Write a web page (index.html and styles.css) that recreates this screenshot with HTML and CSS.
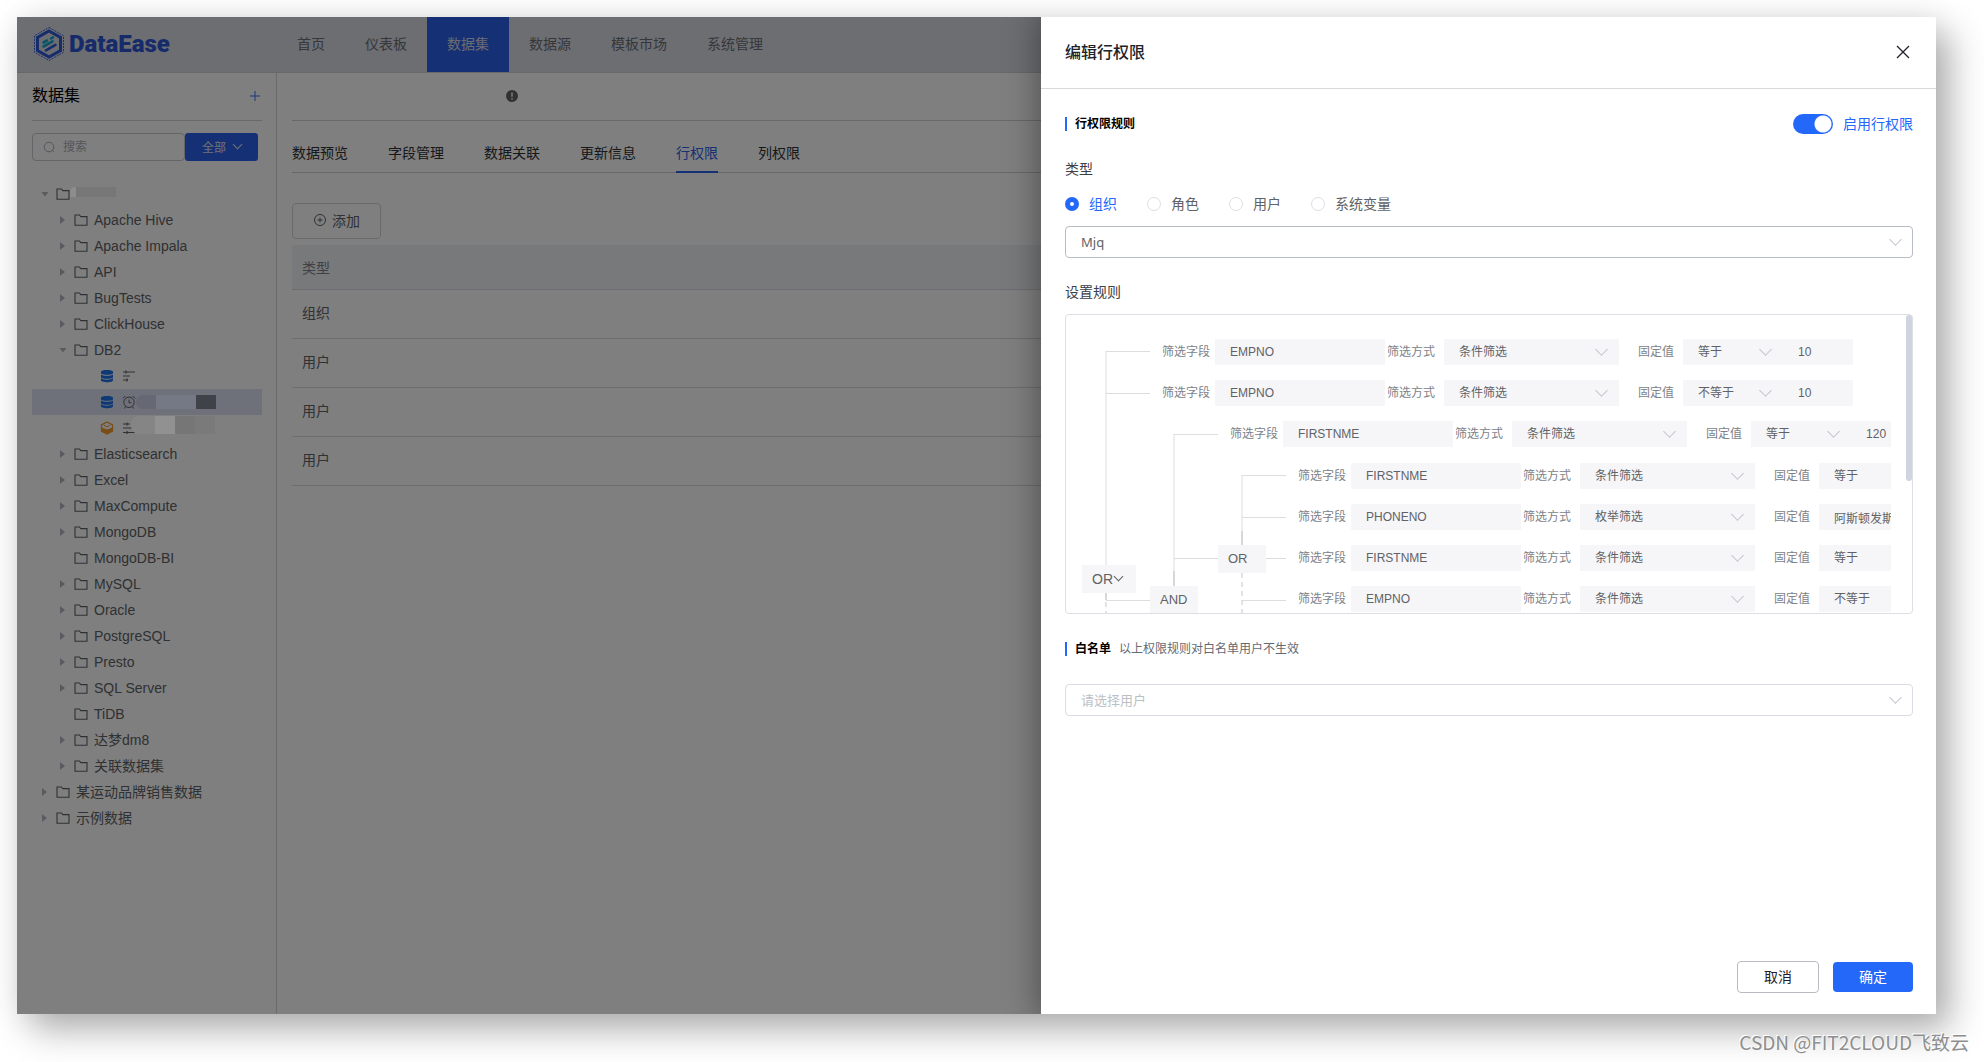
FILE: index.html
```html
<!DOCTYPE html>
<html lang="zh-CN">
<head>
    <meta charset="UTF-8">
    <meta name="viewport" content="width=device-width, initial-scale=1.0">
    <title>DataEase</title>
    <link rel="stylesheet" href="styles.css">
</head>
<body>
    <!-- icon sprite -->
    <svg class="sprite" width="0" height="0" aria-hidden="true">
        <symbol id="folder" viewBox="0 0 14 14"><path d="M1 2h4.400l1.400 1.600H13v8.600H1z" fill="none" stroke="currentColor" stroke-width="1.100"/></symbol>
        <symbol id="db" viewBox="0 0 14 14"><path d="M1 2.800C1 .4 13 .4 13 2.800v1.400c0 2-12 2-12 0zM1 5.400c1.500 1.900 10.500 1.900 12 0v2.800c0 2-12 2-12 0zM1 9.300c1.500 1.900 10.500 1.900 12 0v2c0 2.600-12 2.600-12 0z" fill="#1f73ea"/></symbol>
        <symbol id="cube" viewBox="0 0 14 14"><path d="M7 1l5.500 2.800v6.400L7 13l-5.500-2.800V3.800z" fill="none" stroke="#f09a2e" stroke-width="1.300"/><path d="M1.500 6.500L7 8.500l5.500-2v4L7 13l-5.500-2.500z" fill="#f09a2e"/><path d="M4 4.300L7 5.800l3-1.500" fill="none" stroke="#f09a2e"/></symbol>
        <symbol id="sync" viewBox="0 0 14 14"><path d="M1 3h12M1 7h7M1 11h5M4 1.500v3M5 9.500v3" fill="none" stroke="currentColor" stroke-width="1.200"/></symbol>
        <symbol id="sync2" viewBox="0 0 14 14"><path d="M1 3h7M1 7h9M1 11.500h12M5 1.500v3M5 10v3" fill="none" stroke="currentColor" stroke-width="1.200"/></symbol>
        <symbol id="alarm" viewBox="0 0 14 14"><circle cx="7" cy="7.300" r="5.200" fill="none" stroke="currentColor"/><path d="M7 4.500v3.200h2.500M.8 3.500L3.300 1M13.200 3.500L10.700 1M3.500 11.500l-1 2M10.500 11.500l1 2" fill="none" stroke="currentColor"/></symbol>
    </svg>

    <div class="app">
        <header class="topbar">
            <a class="logo" href="#">
                <svg width="32" height="36" viewBox="0 0 32 36" aria-hidden="true">
                    <path d="M16 1.500l14.500 8.200v16.600L16 34.500 1.500 26.300V9.700z" fill="none" stroke="#3a62d8" stroke-width="1" stroke-dasharray="2 1"/>
                    <path d="M16 5l11.500 6.500v13L16 31 4.500 24.500v-13z" fill="none" stroke="#3058d8" stroke-width="3"/>
                    <path d="M10.500 16.500l3.500-2M18 12.500l2-1.200M10.500 20.500l9-5.200" stroke="#14a9cf" stroke-width="2.600" stroke-linecap="round"/>
                    <path d="M13 24.300l9.500-5.500" stroke="#3058d8" stroke-width="2.600" stroke-linecap="round"/>
                </svg>
                <span>DataEase</span>
            </a>
            <nav class="menu">
                <a href="#">首页</a>
                <a href="#">仪表板</a>
                <a href="#" class="active">数据集</a>
                <a href="#">数据源</a>
                <a href="#">模板市场</a>
                <a href="#">系统管理</a>
            </nav>
        </header>

        <div class="content">
            <aside class="sidebar">
                <div class="side-title">
                    <h2>数据集</h2>
                    <button type="button" class="plus" aria-label="新建">
                        <svg width="12" height="12" viewBox="0 0 12 12"><path d="M6 1v10M1 6h10" stroke="#3370ff" fill="none"/></svg>
                    </button>
                </div>
                <div class="search">
                    <label class="search-box">
                        <svg width="12" height="12" viewBox="0 0 12 12"><circle cx="6" cy="6" r="4.800" fill="none" stroke="#a9adb8"/><path d="M9.300 9.300l1.700 1.700" stroke="#a9adb8"/></svg>
                        <input type="text" placeholder="搜索" aria-label="搜索">
                    </label>
                    <button type="button" class="all-btn">全部<i class="arrow"></i></button>
                </div>
                <ul class="tree">
                    <li><i class="caret open"></i><svg class="ico"><use href="#folder"/></svg><span class="smudge root"></span></li>
                    <li class="l1"><i class="caret"></i><svg class="ico"><use href="#folder"/></svg>Apache Hive</li>
                    <li class="l1"><i class="caret"></i><svg class="ico"><use href="#folder"/></svg>Apache Impala</li>
                    <li class="l1"><i class="caret"></i><svg class="ico"><use href="#folder"/></svg>API</li>
                    <li class="l1"><i class="caret"></i><svg class="ico"><use href="#folder"/></svg>BugTests</li>
                    <li class="l1"><i class="caret"></i><svg class="ico"><use href="#folder"/></svg>ClickHouse</li>
                    <li class="l1"><i class="caret open"></i><svg class="ico"><use href="#folder"/></svg>DB2</li>
                    <li class="l2"><svg class="ico"><use href="#db"/></svg><svg class="ico"><use href="#sync"/></svg></li>
                    <li class="l2 selected"><svg class="ico"><use href="#db"/></svg><svg class="ico"><use href="#alarm"/></svg><span class="smudge blue"></span></li>
                    <li class="l2"><svg class="ico"><use href="#cube"/></svg><svg class="ico"><use href="#sync2"/></svg><span class="smudge grey"></span></li>
                    <li class="l1"><i class="caret"></i><svg class="ico"><use href="#folder"/></svg>Elasticsearch</li>
                    <li class="l1"><i class="caret"></i><svg class="ico"><use href="#folder"/></svg>Excel</li>
                    <li class="l1"><i class="caret"></i><svg class="ico"><use href="#folder"/></svg>MaxCompute</li>
                    <li class="l1"><i class="caret"></i><svg class="ico"><use href="#folder"/></svg>MongoDB</li>
                    <li class="l1"><i class="caret none"></i><svg class="ico"><use href="#folder"/></svg>MongoDB-BI</li>
                    <li class="l1"><i class="caret"></i><svg class="ico"><use href="#folder"/></svg>MySQL</li>
                    <li class="l1"><i class="caret"></i><svg class="ico"><use href="#folder"/></svg>Oracle</li>
                    <li class="l1"><i class="caret"></i><svg class="ico"><use href="#folder"/></svg>PostgreSQL</li>
                    <li class="l1"><i class="caret"></i><svg class="ico"><use href="#folder"/></svg>Presto</li>
                    <li class="l1"><i class="caret"></i><svg class="ico"><use href="#folder"/></svg>SQL Server</li>
                    <li class="l1"><i class="caret none"></i><svg class="ico"><use href="#folder"/></svg>TiDB</li>
                    <li class="l1"><i class="caret"></i><svg class="ico"><use href="#folder"/></svg>达梦dm8</li>
                    <li class="l1"><i class="caret"></i><svg class="ico"><use href="#folder"/></svg>关联数据集</li>
                    <li><i class="caret"></i><svg class="ico"><use href="#folder"/></svg>某运动品牌销售数据</li>
                    <li><i class="caret"></i><svg class="ico"><use href="#folder"/></svg>示例数据</li>
                </ul>
            </aside>

            <main class="main">
                <div class="info">
                    <svg width="12" height="12" viewBox="0 0 12 12"><circle cx="6" cy="6" r="6" fill="#606266"/><path d="M6 2.500v4.300M6 8v1.500" stroke="#fff" stroke-width="1.400"/></svg>
                </div>
                <nav class="tabs">
                    <a href="#">数据预览</a>
                    <a href="#">字段管理</a>
                    <a href="#">数据关联</a>
                    <a href="#">更新信息</a>
                    <a href="#" class="active">行权限</a>
                    <a href="#">列权限</a>
                </nav>
                <button type="button" class="add-btn">
                    <svg width="14" height="14" viewBox="0 0 14 14"><circle cx="7" cy="7" r="5.500" fill="none" stroke="currentColor"/><path d="M7 4.500v5M4.500 7h5" stroke="currentColor"/></svg>
                    添加
                </button>
                <table class="perm-table">
                    <thead><tr><th>类型</th></tr></thead>
                    <tbody>
                        <tr><td>组织</td></tr>
                        <tr><td>用户</td></tr>
                        <tr><td>用户</td></tr>
                        <tr><td>用户</td></tr>
                    </tbody>
                </table>
            </main>
        </div>

        <div class="mask"></div>

        <section class="drawer">
            <header class="drawer-head">
                <h1>编辑行权限</h1>
                <button type="button" class="close" aria-label="关闭">
                    <svg width="14" height="14" viewBox="0 0 14 14"><path d="M1 1l12 12M13 1L1 13" stroke="#1f2329" stroke-width="1.300" fill="none"/></svg>
                </button>
            </header>

            <div class="drawer-body">
                <div class="section">
                    <h3>行权限规则</h3>
                    <label class="switch"><input type="checkbox" checked><span>启用行权限</span></label>
                </div>

                <div class="caption">类型</div>
                <div class="radios">
                    <label><input type="radio" name="type" checked><span>组织</span></label>
                    <label><input type="radio" name="type"><span>角色</span></label>
                    <label><input type="radio" name="type"><span>用户</span></label>
                    <label><input type="radio" name="type"><span>系统变量</span></label>
                </div>
                <div class="picker dark">
                    <select aria-label="组织"><option>Mjq</option></select>
                </div>

                <div class="caption rules-caption">设置规则</div>
                <div class="rules-box">
                    <div class="rules">
                        <svg class="links" width="220" height="300" viewBox="0 0 220 300" aria-hidden="true">
                            <g fill="none" stroke="#eeeeee" stroke-width="2">
                                <path d="M24 12v214M92 95v137M160 136v56"/>
                            </g>
                            <g fill="none" stroke="#d8d8d8" stroke-width="2">
                                <path d="M92 232v15M160 192v14M24 254v7"/>
                            </g>
                            <g fill="none" stroke="#e3e3e3" stroke-width="2" stroke-dasharray="5 4">
                                <path d="M24 263v30M160 234v60"/>
                            </g>
                            <g fill="none" stroke="#dddddd">
                                <path d="M24 12.500h44M24 54.500h44M24 261.500h44M92 95.500h44M92 219.500h44M160 136.500h44M160 178.500h44M160 219.500h44M160 261.500h44"/>
                            </g>
                        </svg>
                        <button type="button" class="op op-root">OR<i class="arrow"></i></button>
                        <button type="button" class="op op-and">AND</button>
                        <button type="button" class="op op-or">OR</button>

                        <div class="group">
                            <div class="rule">
                                <label class="field">筛选字段<input type="text" value="EMPNO"></label>
                                <label class="mode">筛选方式<span class="sel"><select><option>条件筛选</option></select></span></label>
                                <label class="value">固定值<span class="sel small"><select><option>等于</option></select></span></label>
                                <input class="num" type="text" value="10" aria-label="值">
                            </div>
                            <div class="rule">
                                <label class="field">筛选字段<input type="text" value="EMPNO"></label>
                                <label class="mode">筛选方式<span class="sel"><select><option>条件筛选</option></select></span></label>
                                <label class="value">固定值<span class="sel small"><select><option>不等于</option></select></span></label>
                                <input class="num" type="text" value="10" aria-label="值">
                            </div>
                            <div class="group">
                                <div class="rule">
                                    <label class="field">筛选字段<input type="text" value="FIRSTNME"></label>
                                    <label class="mode">筛选方式<span class="sel"><select><option>条件筛选</option></select></span></label>
                                    <label class="value">固定值<span class="sel small"><select><option>等于</option></select></span></label>
                                    <input class="num" type="text" value="120" aria-label="值">
                                </div>
                                <div class="group inner">
                                    <div class="rule">
                                        <label class="field">筛选字段<input type="text" value="FIRSTNME"></label>
                                        <label class="mode">筛选方式<span class="sel"><select><option>条件筛选</option></select></span></label>
                                        <label class="value">固定值<span class="sel small"><select><option>等于</option></select></span></label>
                                    </div>
                                    <div class="rule">
                                        <label class="field">筛选字段<input type="text" value="PHONENO"></label>
                                        <label class="mode">筛选方式<span class="sel"><select><option>枚举筛选</option></select></span></label>
                                        <label class="value">固定值<input type="text" value="阿斯顿发斯"></label>
                                    </div>
                                    <div class="rule">
                                        <label class="field">筛选字段<input type="text" value="FIRSTNME"></label>
                                        <label class="mode">筛选方式<span class="sel"><select><option>条件筛选</option></select></span></label>
                                        <label class="value">固定值<span class="sel small"><select><option>等于</option></select></span></label>
                                    </div>
                                    <div class="rule">
                                        <label class="field">筛选字段<input type="text" value="EMPNO"></label>
                                        <label class="mode">筛选方式<span class="sel"><select><option>条件筛选</option></select></span></label>
                                        <label class="value">固定值<span class="sel small"><select><option>不等于</option></select></span></label>
                                    </div>
                                </div>
                            </div>
                        </div>
                    </div>
                    <div class="thumb"></div>
                </div>

                <div class="section">
                    <h3>白名单</h3>
                    <p>以上权限规则对白名单用户不生效</p>
                </div>
                <div class="picker users">
                    <select aria-label="白名单"><option>请选择用户</option></select>
                </div>
            </div>

            <footer class="drawer-foot">
                <button type="button" class="cancel">取消</button>
                <button type="button" class="ok">确定</button>
            </footer>
        </section>
    </div>

    <div class="watermark">CSDN @FIT2CLOUD飞致云</div>
</body>
</html>
```

FILE: styles.css
```css
* {
    box-sizing: border-box;
}

body {
    margin: 0;
    padding: 17px 48px 48px 17px;
    background: #fff;
    font-family: "Liberation Sans", "Noto Sans CJK SC", sans-serif;
    font-size: 14px;
    line-height: 20px;
    color: #606266;
}

h1, h2, h3, p, ul {
    margin: 0;
    padding: 0;
}

a {
    color: inherit;
    text-decoration: none;
}

button, input, select {
    font-family: inherit;
    font-size: inherit;
    color: inherit;
    border: none;
    margin: 0;
    padding: 0;
    background: none;
    outline: none;
}

select {
    appearance: none;
}

.sprite {
    position: absolute;
}

.app {
    position: relative;
    display: flex;
    flex-direction: column;
    min-height: calc(100vh - 65px);
    background: #fff;
    box-shadow: 14px 16px 34px rgba(0, 0, 0, 0.3), 0 0 30px rgba(0, 0, 0, 0.08);
}

/* top bar */
.topbar {
    display: flex;
    height: 56px;
    background: #dadce5;
    border-bottom: 1px solid #cfd0d4;
}

.logo {
    display: flex;
    align-items: center;
    gap: 4px;
    width: 260px;
    padding-left: 16px;
    padding-bottom: 2px;
    font-family: Roboto, sans-serif;
    font-weight: 900;
    font-size: 24px;
    color: #2f57d6;
}

.menu {
    display: flex;
}

.menu a {
    padding: 0 20px;
    line-height: 55px;
    color: #6c6e75;
}

.menu .active {
    background: #2a61e8;
    color: #d4d9e6;
}

.content {
    display: flex;
    flex: 1;
}

/* dataset tree */
.sidebar {
    width: 260px;
    padding: 0 14px 0 15px;
    border-right: 1px solid #d4d5d8;
}

.side-title {
    display: flex;
    justify-content: space-between;
    align-items: center;
    height: 48px;
    padding-bottom: 2px;
    border-bottom: 1px solid #d0d1d4;
}

.side-title h2 {
    font-size: 16px;
    font-weight: 400;
    color: #000;
}

.plus {
    display: flex;
    padding-right: 1px;
}

.search {
    display: flex;
    margin: 12px 4px 20px 0;
}

.search-box {
    display: flex;
    align-items: center;
    gap: 8px;
    flex: 1;
    height: 28px;
    padding-left: 10px;
    border: 1px solid #c8cad0;
    border-radius: 4px;
    font-size: 12px;
}

.search-box input {
    width: 100px;
}

.search-box input::placeholder {
    color: #a9adb8;
    opacity: 1;
}

.all-btn {
    display: flex;
    align-items: center;
    justify-content: center;
    gap: 8px;
    width: 73px;
    height: 28px;
    padding-bottom: 2px;
    background: #2a61e8;
    border-radius: 3px;
    color: #e0e4ee;
    font-size: 12px;
}

.arrow {
    width: 7px;
    height: 7px;
    margin-top: -4px;
    border: solid currentColor;
    border-width: 0 1px 1px 0;
    transform: rotate(45deg);
}

.tree {
    list-style: none;
}

.tree li {
    display: flex;
    align-items: center;
    height: 26px;
    padding-left: 10px;
    white-space: nowrap;
}

.tree .l1 {
    padding-left: 28px;
}

.tree .l2 {
    padding-left: 68px;
}

.tree .selected {
    background: #dde2f5;
}

.ico {
    width: 14px;
    height: 14px;
    margin-right: 6px;
}

.l2 .ico {
    margin-right: 8px;
}

.l2 .ico + .ico {
    margin-right: 0;
}

.caret {
    width: 5px;
    height: 8px;
    margin-right: 9px;
    background: #b4b7c0;
    clip-path: polygon(0 0, 100% 50%, 0 100%);
}

.caret.open {
    width: 8px;
    height: 5px;
    margin-left: -1px;
    margin-right: 7px;
    clip-path: polygon(0 0, 100% 0, 50% 100%);
}

.caret.none {
    background: none;
}

/* painted-over names, kept brighter than the mask */
.smudge {
    position: relative;
    z-index: 2;
}

.root {
    width: 46px;
    height: 10px;
    margin-left: -6px;
    margin-top: -4px;
    background: linear-gradient(90deg, #8d8d8d 6px, #777 6px);
    border-radius: 5px 0 0 0;
}

.blue {
    width: 80px;
    height: 14px;
    background: linear-gradient(90deg, #666973 20px, #757986 20px, #757986 60px, #40424a 60px);
    border-radius: 8px 0 0 8px;
}

.grey {
    width: 84px;
    height: 18px;
    margin-top: -6px;
    margin-left: -5px;
    background: linear-gradient(90deg, #858585 24px, #919191 24px, #919191 44px, #767676 44px, #767676 64px, #7a7a7a 64px);
    border-radius: 8px 0 0 8px;
}

/* main area */
.main {
    flex: 1;
    padding-left: 15px;
}

.info {
    height: 48px;
    padding: 17px 0 0 214px;
    border-bottom: 1px solid #d0d1d4;
}

.info svg {
    display: block;
}

.tabs {
    display: flex;
    gap: 40px;
    height: 52px;
    border-bottom: 1px solid #d0d1d4;
    color: #303133;
}

.tabs a {
    height: 52px;
    padding-top: 22px;
}

.tabs .active {
    color: #2a61e8;
    border-bottom: 2px solid #2a61e8;
}

.add-btn {
    display: flex;
    align-items: center;
    justify-content: center;
    gap: 5px;
    width: 89px;
    height: 36px;
    margin: 30px 0 6px;
    padding-bottom: 2px;
    border: 1px solid #d0d2d7;
    border-radius: 4px;
}

.perm-table {
    width: 100%;
    border-collapse: separate;
    border-spacing: 0;
}

.perm-table th, .perm-table td {
    padding: 0 10px;
    text-align: left;
    font-weight: 400;
    border-bottom: 1px solid #d8dae0;
}

.perm-table th {
    height: 45px;
    padding-top: 2px;
    background: #f0f2f6;
    color: #808288;
}

.perm-table td {
    height: 49px;
    padding-bottom: 2px;
}

.mask {
    position: absolute;
    inset: 0;
    z-index: 1;
    background: rgba(0, 0, 0, 0.5);
}

/* drawer */
.drawer {
    position: absolute;
    top: 0;
    right: 0;
    bottom: 0;
    z-index: 3;
    display: flex;
    flex-direction: column;
    width: 895px;
    max-width: 100%;
    background: #fff;
    box-shadow: 0 0 30px 4px rgba(0, 0, 0, 0.35);
    clip-path: inset(0 0 0 -40px);
}

.drawer-head {
    display: flex;
    justify-content: space-between;
    align-items: center;
    height: 72px;
    padding: 0 26px 0 24px;
    border-bottom: 1px solid #d8d9dc;
}

.drawer-head h1 {
    font-size: 16px;
    font-weight: 500;
    color: #1f2329;
}

.close {
    display: flex;
    padding-bottom: 2px;
}

.drawer-body {
    flex: 1;
    padding: 0 23px 0 24px;
}

.section {
    display: flex;
    align-items: center;
    gap: 8px;
    height: 20px;
    margin: 25px 0 24px;
    font-size: 12px;
}

.section h3 {
    padding-left: 8px;
    border-left: 2px solid #2468fa;
    font-size: 12px;
    line-height: 14px;
    font-weight: 700;
    color: #000;
}

.section p {
    color: #646a73;
}

.switch {
    display: flex;
    align-items: center;
    gap: 10px;
    margin-left: auto;
    font-size: 14px;
    color: #2468fa;
}

.switch input {
    appearance: none;
    width: 40px;
    height: 20px;
    border-radius: 10px;
    background: radial-gradient(circle at 30px 10px, #fff 8px, #2468fa 9px);
}

.caption {
    line-height: 22px;
    color: #3c4047;
}

.radios {
    display: flex;
    gap: 30px;
    margin: 13px 0 11px;
    line-height: 22px;
}

.radios label {
    display: flex;
    align-items: center;
    gap: 10px;
}

.radios input {
    appearance: none;
    width: 14px;
    height: 14px;
    border: 1px solid #dcdfe6;
    border-radius: 50%;
}

.radios input:checked {
    border: 5px solid #2468fa;
}

.radios input:checked + span {
    color: #2468fa;
}

.picker, .sel {
    position: relative;
    display: block;
}

.picker::after, .sel::after {
    content: "";
    position: absolute;
    top: 50%;
    right: 13px;
    width: 8px;
    height: 8px;
    margin-top: -7px;
    border: solid #c0c4cc;
    border-width: 0 1px 1px 0;
    transform: rotate(45deg);
    pointer-events: none;
}

.picker select {
    width: 100%;
    height: 32px;
    padding-left: 15px;
    border: 1px solid #d9dce3;
    border-radius: 4px;
    font-size: 13px;
}

.picker.dark select {
    border-color: #b8bcc5;
    font-family: "Noto Sans", "Noto Sans CJK SC", sans-serif;
}

.picker.users {
    margin-top: 25px;
}

.picker.users select {
    color: #bbbfc6;
}

.rules-caption {
    margin: 23px 0 11px;
}

/* rule tree */
.rules-box {
    position: relative;
    height: 300px;
    padding: 0 21px 0 16px;
    border: 1px solid #dcdfe3;
    border-radius: 4px;
}

.rules {
    position: relative;
    height: 100%;
    padding-top: 24px;
    overflow: hidden;
    font-size: 12px;
}

.thumb {
    position: absolute;
    top: 0;
    right: 0;
    width: 6px;
    height: 166px;
    border-radius: 3px;
    background: #d0d4e0;
}

.links {
    position: absolute;
    top: 24px;
    left: 0;
}

.op {
    position: absolute;
    display: flex;
    align-items: center;
    width: 48px;
    height: 28px;
    padding-left: 10px;
    padding-bottom: 1px;
    background: #f6f6f9;
    font-size: 13px;
}

.op-root {
    top: 250px;
    left: 0;
    width: 54px;
    gap: 2px;
    font-size: 14px;
}

.op-and {
    top: 271px;
    left: 68px;
}

.op-or {
    top: 230px;
    left: 136px;
}

.group {
    padding-left: 68px;
}

.group.inner {
    padding-top: 1px;
}

.rule {
    display: flex;
    width: 750px;
    height: 26px;
    margin-bottom: 15px;
    padding-left: 12px;
    color: #808288;
}

.rule label {
    display: flex;
    align-items: center;
    flex-shrink: 0;
    white-space: nowrap;
}

.rule input, .rule select {
    width: 170px;
    height: 26px;
    padding-left: 15px;
    background: #f6f6f9;
    color: #606266;
}

.rule .field {
    gap: 5px;
    margin-right: 2px;
}

.rule .mode {
    gap: 9px;
    margin-right: 19px;
}

.rule .mode select {
    width: 175px;
}

.rule .value {
    gap: 9px;
}

.rule .small select {
    width: 100px;
}

.rule .num {
    width: 70px;
}

.drawer-foot {
    display: flex;
    justify-content: flex-end;
    align-items: center;
    gap: 14px;
    padding: 0 23px 21px;
}

.drawer-foot button {
    padding-bottom: 2px;
}

.cancel {
    width: 82px;
    height: 32px;
    border: 1px solid #b8bcc2;
    border-radius: 4px;
    color: #1f2329;
}

.ok {
    width: 80px;
    height: 30px;
    border-radius: 4px;
    background: #2468fa;
    color: #fff;
}

.watermark {
    position: absolute;
    right: 15px;
    bottom: 7px;
    font-family: "Noto Sans CJK SC", sans-serif;
    font-size: 19px;
    line-height: 26px;
    color: #8e8e8e;
    text-shadow: -1px -1px 0 #fff;
}
```
